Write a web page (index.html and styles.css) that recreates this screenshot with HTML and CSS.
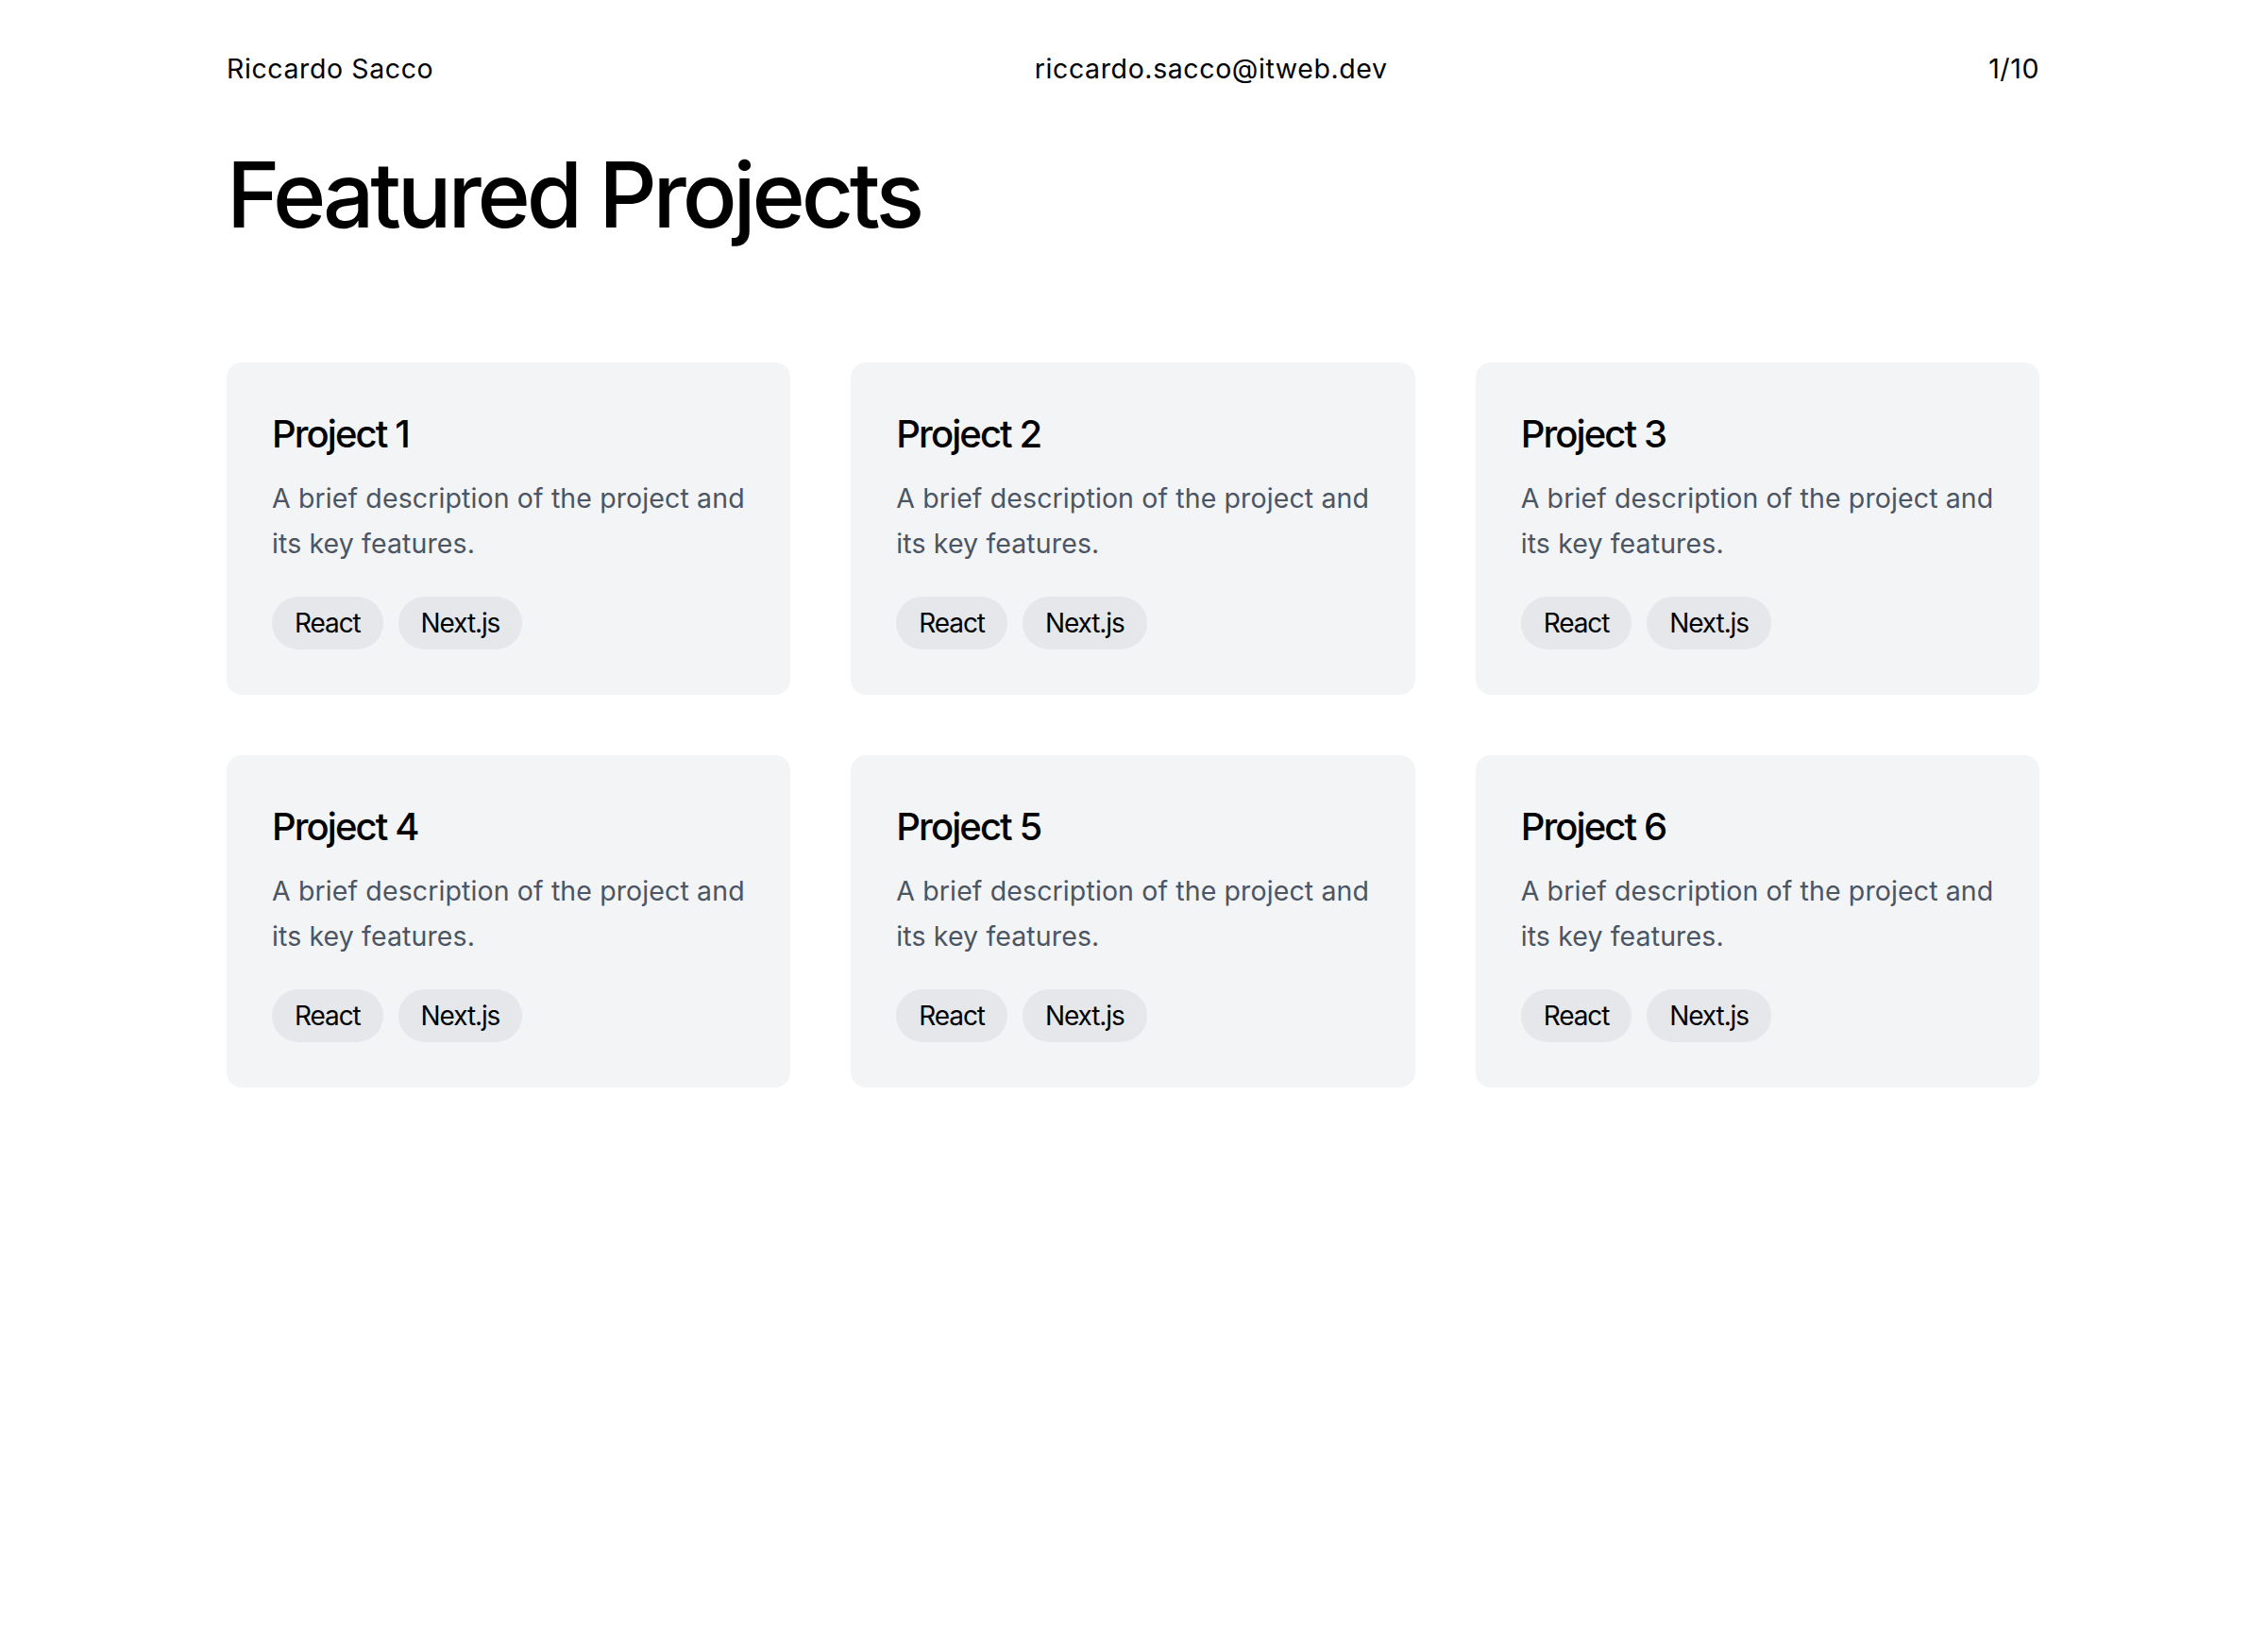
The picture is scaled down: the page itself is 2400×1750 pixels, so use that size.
FILE: index.html
```html
<!DOCTYPE html>
<html lang="en">
<head>
<meta charset="utf-8">
<title>Featured Projects</title>
<link rel="stylesheet" href="styles.css">
</head>
<body>
<div class="page">
  <header class="top">
    <span>Riccardo Sacco</span>
    <span>riccardo.sacco@itweb.dev</span>
    <span>1/10</span>
  </header>
  <h1 class="title">Featured Projects</h1>
  <main class="grid">
    <article class="card">
      <h2 class="card-title">Project 1</h2>
      <p class="card-desc">A brief description of the project and its key features.</p>
      <div class="tags"><span class="tag">React</span><span class="tag">Next.js</span></div>
    </article>
    <article class="card">
      <h2 class="card-title">Project 2</h2>
      <p class="card-desc">A brief description of the project and its key features.</p>
      <div class="tags"><span class="tag">React</span><span class="tag">Next.js</span></div>
    </article>
    <article class="card">
      <h2 class="card-title">Project 3</h2>
      <p class="card-desc">A brief description of the project and its key features.</p>
      <div class="tags"><span class="tag">React</span><span class="tag">Next.js</span></div>
    </article>
    <article class="card">
      <h2 class="card-title">Project 4</h2>
      <p class="card-desc">A brief description of the project and its key features.</p>
      <div class="tags"><span class="tag">React</span><span class="tag">Next.js</span></div>
    </article>
    <article class="card">
      <h2 class="card-title">Project 5</h2>
      <p class="card-desc">A brief description of the project and its key features.</p>
      <div class="tags"><span class="tag">React</span><span class="tag">Next.js</span></div>
    </article>
    <article class="card">
      <h2 class="card-title">Project 6</h2>
      <p class="card-desc">A brief description of the project and its key features.</p>
      <div class="tags"><span class="tag">React</span><span class="tag">Next.js</span></div>
    </article>
  </main>
</div>
</body>
</html>
```
FILE: styles.css
```css
* { box-sizing: border-box; }
html, body {
  margin: 0;
  padding: 0;
  background: #ffffff;
}
body {
  font-family: Inter, "Liberation Sans", sans-serif;
  color: #000000;
}
.page {
  width: 1920px;
  margin: 0 auto;
  padding-top: 53px;
}
.top {
  display: flex;
  justify-content: space-between;
  font-size: 28.5px;
  line-height: 40px;
  letter-spacing: 0.6px;
}
.title {
  margin: 65px 0 130px 0;
  font-size: 96px;
  line-height: 96px;
  font-weight: 500;
  letter-spacing: -4.2px;
}
.grid {
  display: grid;
  grid-template-columns: repeat(3, 1fr);
  gap: 64px;
}
.card {
  background: #f3f4f6;
  border-radius: 16px;
  padding: 48px;
}
.card-title {
  margin: 0 0 16px 0;
  font-size: 40px;
  line-height: 56px;
  font-weight: 500;
  letter-spacing: -1.9px;
}
.card-desc {
  margin: 0 0 32px 0;
  font-size: 28.5px;
  line-height: 48px;
  color: #4b5563;
  letter-spacing: 0.12px;
}
.tags {
  display: flex;
  gap: 16px;
}
.tag {
  background: #e5e7eb;
  border-radius: 9999px;
  padding: 8px 24px;
  font-size: 28px;
  line-height: 40px;
  letter-spacing: -1.1px;
}
```
